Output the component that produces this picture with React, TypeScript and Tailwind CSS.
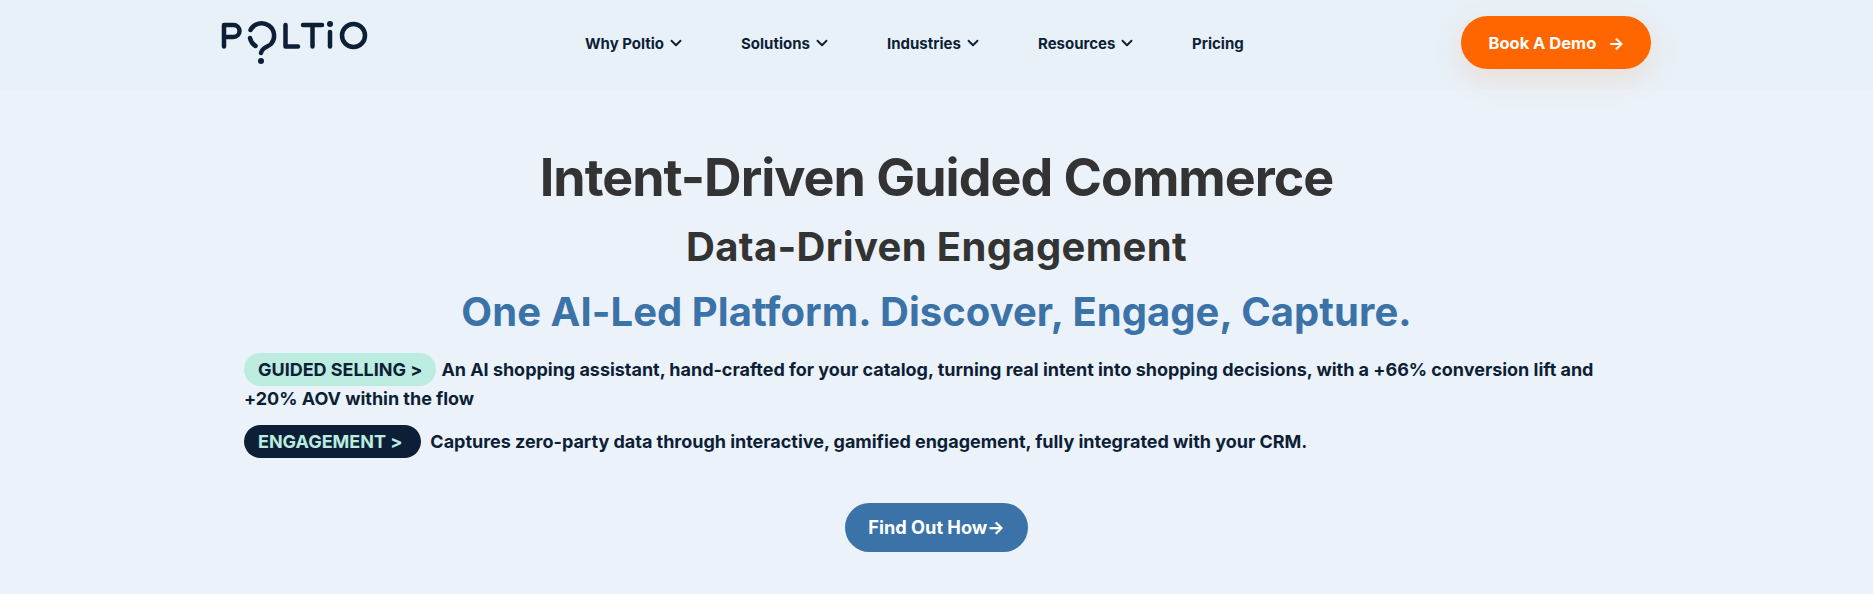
import { ChevronDown } from "lucide-react";

const navItems = [
  { label: "Why Poltio", caret: true, width: "w-[156px]" },
  { label: "Solutions", caret: true, width: "w-[146px]" },
  { label: "Industries", caret: true, width: "w-[151px]" },
  { label: "Resources", caret: true, width: "w-[154px]" },
  { label: "Pricing", caret: false, width: "w-[60px]" },
];

const Logo = () => (
  <svg width="150" height="50" viewBox="20 18 150 50" fill="none" stroke="#0d1f36" strokeWidth="4.500" strokeLinecap="round" strokeLinejoin="round">
    <path d="M24 46.500V25H33.500a6 6 0 0 1 0 12H24" />
    <path d="M50.500 30A12.500 12.500 0 1 1 71 44c-3 3-9 3-10 9" />
    <path d="M50 38A12.500 12.500 0 0 0 55.500 46" />
    <path d="M85.500 25V46.500H98" />
    <path d="M103 25H122M112.500 25V46.500" />
    <path d="M130 32V46.500" />
    <circle cx="130" cy="24" r="3" fill="#0d1f36" stroke="none" />
    <circle cx="153.500" cy="35.500" r="11.500" />
    <circle cx="61" cy="61" r="3" fill="#0d1f36" stroke="none" />
  </svg>
);

const App = () => {
  return (
    <div className="w-full h-[594px] overflow-hidden bg-[#ebf2f9] font-['Inter',sans-serif] text-[#0d1f36]">
      <header className="h-[90px] bg-[#e8f1f8] flex items-center pl-[220px]">
        <div className="-mt-[4px]">
          <Logo />
        </div>
        <nav className="flex items-center ml-[215px] -mt-[4px]">
          {navItems.map((item) => (
            <a key={item.label} className={`flex items-center gap-[3px] text-[15px] font-bold leading-none ${item.width}`}>
              <span>{item.label}</span>
              {item.caret && <ChevronDown size={18} strokeWidth={2.5} />}
            </a>
          ))}
        </nav>
        <button className="ml-[209px] -mt-[5px] w-[190px] h-[53px] pt-[1px] pl-[1px] rounded-full bg-[#ff6600] text-white text-[16.500px] font-bold flex items-center justify-center gap-[12px] shadow-[0_10px_30px_rgba(255,102,0,0.14)]">
          Book A Demo
          <span className="text-[17px] font-bold leading-none">→</span>
        </button>
      </header>

      <main className="flex flex-col items-center">
        <h1 className="mt-[54px] text-[52px] leading-[68px] font-bold tracking-[-1px] text-[#333333]">Intent-Driven Guided Commerce</h1>
        <h2 className="mt-[11px] text-[40px] leading-[48px] font-bold tracking-[0.35px] text-[#333333]">Data-Driven Engagement</h2>
        <h3 className="mt-[14px] text-[40px] leading-[54px] font-bold tracking-[0.05px] text-[#3b73a8]">One AI-Led Platform. Discover, Engage, Capture.</h3>

        <div className="w-[1385px] mt-[14px] text-[18px] font-bold leading-[26px] tracking-[-0.025px]">
          <p>
            <span className="inline-block h-[33px] leading-[33px] px-[14px] mr-[5px] rounded-full bg-[#bcebe0]">GUIDED SELLING &gt;</span>
            An AI shopping assistant, hand-crafted for your catalog, turning real intent into shopping decisions, with a +66% conversion lift and +20% AOV within the flow
          </p>
          <p className="mt-[13px]">
            <span className="inline-block h-[33px] leading-[33px] pl-[14px] pr-[19px] mr-[9px] rounded-full bg-[#0d1f36] text-[#bcebe0]">ENGAGEMENT &gt;</span>
            Captures zero-party data through interactive, gamified engagement, fully integrated with your CRM.
          </p>
        </div>

        <button className="mt-[45px] w-[183px] h-[49px] rounded-full bg-[#3b73a8] text-white text-[18.200px] font-bold">Find Out How→</button>
      </main>
    </div>
  );
};

export default App;
